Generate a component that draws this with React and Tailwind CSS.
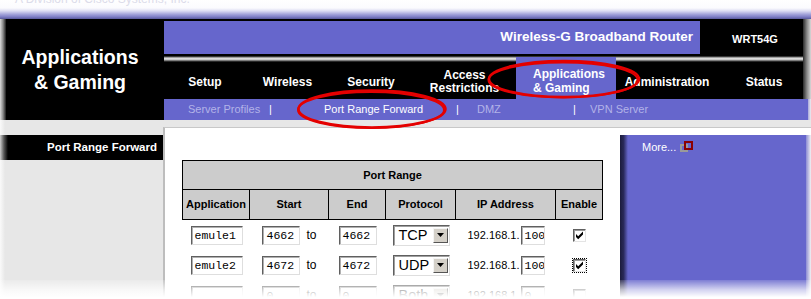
function Field({ className, children }) {
  return (
    <div
      className={`h-[19px] overflow-hidden whitespace-nowrap border border-t-[#5f5f5f] border-l-[#5f5f5f] border-r-[#dedede] border-b-[#dedede] bg-white pl-[3px] font-['Liberation_Mono',monospace] text-[11.5px] leading-[17px] text-black shadow-[inset_1px_1px_0_#b0b0b0] ${className}`}
    >
      {children}
    </div>
  );
}

function Select({ value }) {
  return (
    <div className="flex h-[21px] w-[57px] items-center border border-t-[#5f5f5f] border-l-[#5f5f5f] border-r-[#dedede] border-b-[#dedede] bg-white shadow-[inset_1px_1px_0_#a0a0a0]">
      <span className="flex-1 pl-[5px] text-[14.5px] leading-[19px] text-black">{value}</span>
      <span className="mr-[1px] flex h-[15px] w-[15px] items-center justify-center border border-t-[#f4f4f4] border-l-[#f4f4f4] border-r-[#555555] border-b-[#555555] bg-[#d4d0c8]">
        <svg width="7" height="4" viewBox="0 0 7 4">
          <path d="M0 0h7L3.5 4z" fill="#000" />
        </svg>
      </span>
    </div>
  );
}

function Check({ on, focus }) {
  return (
    <div className={focus ? "outline-1 outline-dotted outline-black outline-offset-[0px]" : ""}>
      <div className="flex h-[13px] w-[13px] items-center justify-center border border-t-[#5f5f5f] border-l-[#5f5f5f] border-r-[#e4e4e4] border-b-[#e4e4e4] bg-white shadow-[inset_1px_1px_0_#9a9a9a]">
        {on && (
          <svg width="9" height="9" viewBox="0 0 9 9">
            <path d="M1 3L3.2 5.2L8 0.5V3.6L3.2 8.3L1 6.1Z" fill="#000" />
          </svg>
        )}
      </div>
    </div>
  );
}

const rows = [
  { app: "emule1", s: "4662", e: "4662", p: "TCP", ip: "100", on: true, focus: false },
  { app: "emule2", s: "4672", e: "4672", p: "UDP", ip: "100", on: true, focus: true },
  { app: "", s: "0", e: "0", p: "Both", ip: "0", on: false, focus: false },
];

export default function App() {
  return (
    <div className="relative h-[299px] w-[811px] overflow-hidden bg-white font-['Liberation_Sans',Arial,sans-serif]">
      {/* top faded strip */}
      <div className="h-[19px] overflow-hidden bg-[linear-gradient(to_bottom,#ffffff_0px,#fbfbfe_8px,#dcdcf2_11px,#a8a8dc_14px,#7c7cc4_17px,#5a5a9a_19px)]">
        <div className="-mt-[7px] whitespace-nowrap pl-[15px] text-[12px] leading-[12px] text-[#dcdcea]">
          A Division of Cisco Systems, Inc.
        </div>
      </div>

      {/* header */}
      <div className="flex h-[101px]">
        <div className="flex w-[164px] bg-black">
          <div className="w-[6px] bg-[linear-gradient(to_right,#dcdcdc,#8a8a8a_50%,#1a1a1a)]" />
          <div className="flex flex-1 items-center justify-center pr-[10px] text-center text-[19.5px] font-bold leading-[25px] text-white">
            Applications
            <br />& Gaming
          </div>
        </div>

        <div className="flex w-[647px] flex-col">
          {/* row 1 */}
          <div className="flex h-[37px] bg-black">
            <div className="mt-[2px] flex h-[33px] w-[536px] items-center justify-end bg-[#6666cc] pr-[7px] text-[13.5px] font-bold text-white">
              Wireless-G Broadband Router
            </div>
            <div className="flex w-[103px] items-center justify-center pl-[7px] pt-[3px] text-[11px] font-bold text-white">
              WRT54G
            </div>
            <div className="w-[8px] bg-[linear-gradient(to_right,#2a2a2a,#8a8a8a_50%,#d8d8d8)]" />
          </div>

          {/* nav row */}
          <div className="flex h-[43px] text-[12px] font-bold text-white">
            <div className="flex flex-1 bg-[linear-gradient(to_bottom,#000_0px,#6e6e6e_1px,#cfcfcf_2px,#e8e8e8_3px,#a8a8a8_4px,#505050_5px,#000_6px)]">
              <div className="flex w-[82px] items-center justify-center pt-[9px]">Setup</div>
              <div className="flex w-[83px] items-center justify-center pt-[9px]">Wireless</div>
              <div className="flex w-[84px] items-center justify-center pt-[9px]">Security</div>
              <div className="flex w-[103px] items-center justify-center pt-[9px] text-center leading-[13px]">
                Access
                <br />
                Restrictions
              </div>
              <div className="mt-[1px] flex w-[100px] items-center bg-[#6666cc] pl-[17px] pt-[6px] leading-[14px]">
                Applications
                <br />& Gaming
              </div>
              <div className="flex w-[102px] items-center justify-center pt-[9px]">Administration</div>
              <div className="flex flex-1 items-center justify-center pl-[7px] pt-[9px]">Status</div>
            </div>
            <div className="w-[8px] bg-[linear-gradient(to_right,#2a2a2a,#8a8a8a_50%,#d8d8d8)]" />
          </div>

          {/* sub nav */}
          <div className="flex h-[21px] text-[11px]">
            <div className="flex flex-1 items-center bg-[#6666cc] text-white">
              <div className="w-[105px] pl-[24px] text-[#b3b3e8]">Server Profiles</div>
              <div className="w-[55px]">|</div>
              <div className="w-[132px]">Port Range Forward</div>
              <div className="w-[21px]">|</div>
              <div className="w-[96px] text-[#b3b3e8]">DMZ</div>
              <div className="w-[17px]">|</div>
              <div className="text-[#b3b3e8]">VPN Server</div>
            </div>
            <div className="w-[3px] bg-[linear-gradient(to_right,#a8a8dc,#eeeeee)]" />
          </div>
        </div>
      </div>

      {/* content */}
      <div className="flex h-[179px] bg-[#e7e7e7]">
        <div className="w-[163px] bg-[linear-gradient(to_right,#fafafa,#e7e7e7_5px)] pt-[15px]">
          <div className="flex h-[25px] bg-black">
            <div className="w-[8px] bg-[linear-gradient(to_right,#cfcfcf,#555555_50%,#000)]" />
            <div className="flex flex-1 items-center justify-end pr-[6px] text-[11.5px] font-bold text-white">
              Port Range Forward
            </div>
          </div>
        </div>

        <div className="flex flex-1 flex-col pt-[7px]">
          <div className="flex flex-1 border-t border-t-[#c8c8c8] border-l-2 border-l-[#bdbdbd] bg-white">
            {/* table area */}
            <div className="w-[455px] pl-[17px] pt-[32px]">
              <div className="w-[421px] border border-black bg-[#cccccc] text-[11px] font-bold text-black">
                <div className="flex h-[29px] items-center justify-center border-b border-black">Port Range</div>
                <div className="grid h-[29px] grid-cols-[67px_79px_57px_70px_100px_46px]">
                  <div className="flex items-center justify-center border-r border-black">Application</div>
                  <div className="flex items-center justify-center border-r border-black">Start</div>
                  <div className="flex items-center justify-center border-r border-black">End</div>
                  <div className="flex items-center justify-center border-r border-black">Protocol</div>
                  <div className="flex items-center justify-center border-r border-black">IP Address</div>
                  <div className="flex items-center justify-center">Enable</div>
                </div>
              </div>
              <div className="w-[421px] px-[1px]">
                {rows.map((r, i) => (
                  <div key={i} className="grid h-[30px] grid-cols-[67px_79px_57px_70px_100px_46px] items-center text-black">
                    <div className="flex justify-center">
                      <Field className="w-[52px]">{r.app}</Field>
                    </div>
                    <div className="flex items-center justify-center gap-[6px]">
                      <Field className="w-[38px]">{r.s}</Field>
                      <span className="text-[12px]">to</span>
                    </div>
                    <div className="flex justify-center">
                      <Field className="w-[38px]">{r.e}</Field>
                    </div>
                    <div className="flex justify-center">
                      <Select value={r.p} />
                    </div>
                    <div className="flex items-center justify-center gap-[1px]">
                      <span className="text-[11px]">192.168.1.</span>
                      <Field className="w-[24px]">{r.ip}</Field>
                    </div>
                    <div className="flex justify-center">
                      <Check on={r.on} focus={r.focus} />
                    </div>
                  </div>
                ))}
              </div>
            </div>

            {/* right purple panel */}
            <div className="mt-[7px] flex w-[186px] bg-[#6666cc]">
              <div className="w-[8px] bg-[linear-gradient(to_right,#1c1c3c,#2a2a5a_45%,#6666cc)]" />
              <div className="pl-[14px] pt-[6px] text-[11px] leading-[13px] text-white">
                More...
                <span className="relative ml-[4px] inline-block h-[8px] w-[8px] border-2 border-[#9a9a9a] align-[-1px]">
                  <span className="absolute left-[2px] top-[-5px] h-[9px] w-[9px] border-2 border-[#8b0000]" />
                </span>
              </div>
            </div>
            <div className="mt-[7px] w-[5px] bg-[linear-gradient(to_right,#8c8cd4,#f2f2f2)]" />
          </div>
        </div>
      </div>

      {/* bottom fade */}
      <div className="pointer-events-none absolute bottom-0 left-0 h-[19px] w-full bg-[linear-gradient(to_bottom,rgba(255,255,255,0.15),rgba(255,255,255,0.7)_50%,#ffffff_90%)]" />

      {/* red hand-drawn ellipses */}
      <svg className="pointer-events-none absolute left-0 top-0" width="811" height="299">
        <ellipse cx="372" cy="109" rx="73.5" ry="18.5" fill="none" stroke="#e40000" strokeWidth="2.5" />
        <ellipse cx="371" cy="110" rx="73" ry="18" fill="none" stroke="#e40000" strokeWidth="2" />
        <ellipse cx="564" cy="79" rx="75" ry="18" fill="none" stroke="#e40000" strokeWidth="2.5" />
        <ellipse cx="563" cy="80" rx="74.5" ry="17.5" fill="none" stroke="#e40000" strokeWidth="2" />
      </svg>
    </div>
  );
}
